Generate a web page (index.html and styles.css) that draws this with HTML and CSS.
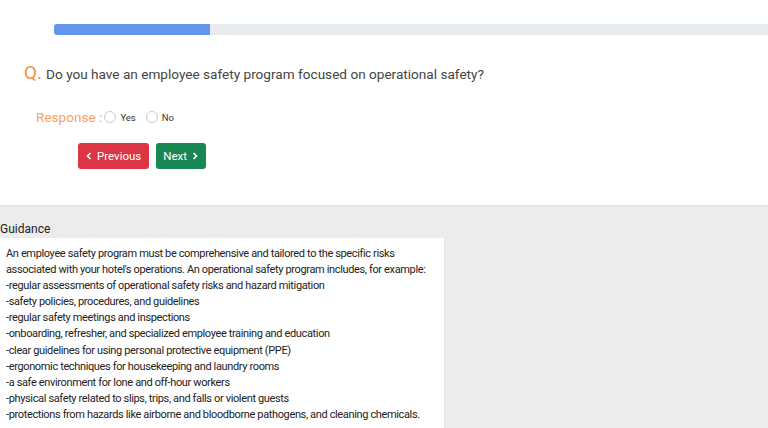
FILE: index.html
```html
<!DOCTYPE html>
<html>
<head>
<meta charset="utf-8">
<link rel="stylesheet" href="styles.css">
</head>
<body>
<div class="top">
  <div class="progress"><div class="progress-fill" style="width: 156px"></div></div>
  <div class="question"><span class="q-mark">Q.</span><span class="q-text">Do you have an employee safety program focused on operational safety?</span></div>
  <div class="response">
    <span class="resp-label">Response :</span>
    <label class="opt"><span class="radio"></span>Yes</label>
    <label class="opt"><span class="radio"></span>No</label>
  </div>
  <div class="buttons">
    <button class="btn btn-prev"><svg class="chev" viewBox="0 0 8 10" width="6" height="8"><path d="M6 1 L2 5 L6 9" fill="none" stroke="#fff" stroke-width="2.2"/></svg>Previous</button>
    <button class="btn btn-next">Next<svg class="chev" viewBox="0 0 8 10" width="6" height="8"><path d="M2 1 L6 5 L2 9" fill="none" stroke="#fff" stroke-width="2.2"/></svg></button>
  </div>
</div>
<div class="guidance">
  <div class="g-title">Guidance</div>
  <div class="g-box">
    <p>An employee safety program must be comprehensive and tailored to the specific risks associated with your hotel's operations. An operational safety program includes, for example:<br>-regular assessments of operational safety risks and hazard mitigation<br>-safety policies, procedures, and guidelines<br>-regular safety meetings and inspections<br>-onboarding, refresher, and specialized employee training and education<br>-clear guidelines for using personal protective equipment (PPE)<br>-ergonomic techniques for housekeeping and laundry rooms<br>-a safe environment for lone and off-hour workers<br>-physical safety related to slips, trips, and falls or violent guests<br>-protections from hazards like airborne and bloodborne pathogens, and cleaning chemicals.</p>
  </div>
</div>
</body>
</html>
```
FILE: styles.css
```css
html, body {
  margin: 0;
  padding: 0;
  background: #ececec;
  font-family: Roboto, "Liberation Sans", sans-serif;
  overflow: hidden;
}
.top {
  background: #fff;
  padding: 24px 0 0 0;
  height: 205px;
  box-sizing: border-box;
}
.progress {
  margin-left: 54px;
  height: 11px;
  background: #e9ecef;
  border-radius: 3px 0 0 3px;
  overflow: hidden;
}
.progress-fill {
  height: 100%;
  background: #6495ed;
}
.question {
  display: flex;
  align-items: baseline;
  margin: 26px 0 0 24px;
}
.q-mark {
  color: #f7943c;
  font-size: 19px;
  margin-right: 4px;
}
.q-text {
  color: #444;
  font-size: 13.6px;
}
.response {
  display: flex;
  align-items: center;
  margin: 25px 0 0 36px;
}
.resp-label {
  color: #f9a35f;
  font-size: 13.6px;
  margin-right: 2px;
}
.opt {
  display: flex;
  align-items: center;
  font-size: 9.5px;
  color: #333;
  margin-right: 10px;
}
.radio {
  width: 10px;
  height: 10px;
  border: 1px solid #c9c9c9;
  border-radius: 50%;
  margin-right: 4px;
  background: #fff;
}
.buttons {
  display: flex;
  gap: 7px;
  margin: 18px 0 0 78px;
}
.btn {
  height: 26px;
  border: none;
  border-radius: 3px;
  color: #fff;
  font-family: Roboto, "Liberation Sans", sans-serif;
  font-size: 11.5px;
  display: flex;
  align-items: center;
  gap: 5px;
  padding: 0 8px;
}
.btn-prev {
  background: #dc3545;
}
.btn-next {
  background: #198754;
  padding: 0 8px 0 7px;
}
.guidance {
  border-top: 1px solid #e3e3e3;
  padding-top: 16px;
}
.g-title {
  font-size: 12px;
  color: #222;
  line-height: 14px;
  margin-bottom: 2px;
}
.g-box {
  background: #fff;
  width: 438px;
  padding: 8px 0 0 6px;
  border-right: 1px solid #e6e6e6;
  height: 182px;
}
.g-box p {
  margin: 0;
  font-size: 11px;
  letter-spacing: -0.36px;
  line-height: 16.1px;
  color: #222;
}
```
